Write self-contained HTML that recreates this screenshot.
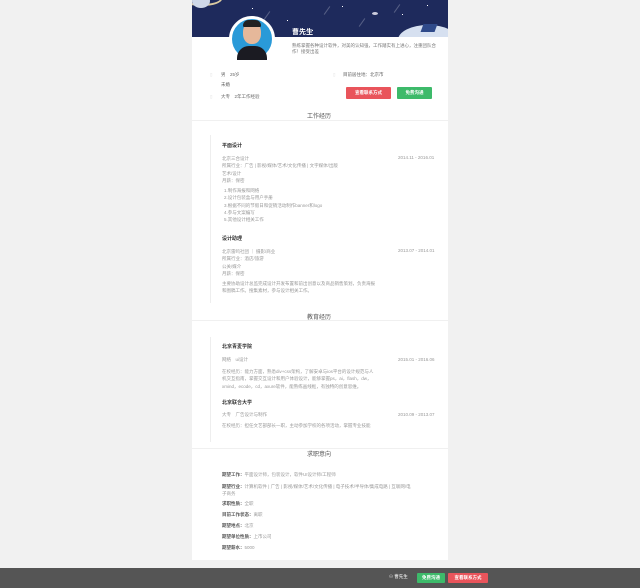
<!DOCTYPE html>
<html><head><meta charset="utf-8"><style>
*{margin:0;padding:0;box-sizing:border-box}
body{width:640px;height:588px;background:#f1f1f1;position:relative;overflow:hidden;font-family:"Liberation Sans","Noto Sans CJK SC",sans-serif;color:#999;font-size:4.5px;line-height:1.4}
.a{position:absolute;white-space:nowrap}
.card{position:absolute;left:192px;top:0;width:256px;height:560px;background:#fff}
.banner{position:absolute;left:192px;top:0;width:256px;height:37px;background:#1e2a5c;overflow:hidden}
.t{color:#555;font-size:6px}
.h{color:#333;font-weight:bold;font-size:5px}
.btn{position:absolute;color:#fff;font-size:4.5px;text-align:center;border-radius:1px;font-weight:bold}
.line{position:absolute;left:210px;width:1px;background:#eee}
.sep{position:absolute;left:192px;width:256px;height:1px;background:#f0f0f0}
.s{position:absolute;width:1px;height:1px;background:#fff}
.st{position:absolute;width:10px;height:1px;background:rgba(255,255,255,.25);transform:rotate(-55deg)}
</style></head><body>
<div class="card"></div>
<div class="banner">
<div class="a" style="left:-10px;top:-8px;width:40px;height:14px;border-radius:50%;border:2px solid #d9c9a0"></div>
<div class="a" style="left:0;top:-6px;width:18px;height:14px;border-radius:50%;background:#cfd8e8"></div>
<div class="a" style="left:180px;top:12px;width:6px;height:3px;border-radius:50%;background:#ccd"></div>
<div class="a" style="left:206px;top:25px;width:60px;height:30px;border-radius:50%;background:#d6e0f0"></div>
<div class="a" style="left:230px;top:24px;width:14px;height:8px;background:#2f4a8a;transform:skewX(-20deg)"></div>
<div class="s" style="left:60px;top:8px"></div><div class="s" style="left:95px;top:20px"></div><div class="s" style="left:150px;top:6px"></div><div class="s" style="left:210px;top:14px"></div><div class="s" style="left:120px;top:30px"></div><div class="s" style="left:235px;top:5px"></div>
<div class="st" style="left:70px;top:15px"></div><div class="st" style="left:130px;top:10px"></div><div class="st" style="left:165px;top:22px"></div><div class="st" style="left:200px;top:8px"></div>
</div>
<div class="a" style="left:229px;top:16px;width:46px;height:46px;border-radius:50%;background:#2a9ad8;border:3px solid #fff"></div>
<div class="a" style="left:243px;top:22px;width:18px;height:22px;border-radius:45%;background:#e6b89a"></div>
<div class="a" style="left:243px;top:20px;width:18px;height:7px;border-radius:8px 8px 2px 2px;background:#222"></div>
<div class="a" style="left:237px;top:46px;width:30px;height:14px;border-radius:12px 12px 0 0;background:#1b1b22"></div>
<div class="a" style="left:292px;top:28px;color:#fff;font-weight:bold;font-size:7px">曹先生</div>
<div class="a" style="left:292px;top:43px;color:#777;white-space:normal;width:148px">熟练掌握各种设计软件，对美的认知强，工作踏实有上进心，注重团队合作！接受出差</div>
<div class="a" style="left:210px;top:72px;color:#ddd">▯</div>
<div class="a" style="left:221px;top:72px;color:#666">男　25岁</div>
<div class="a" style="left:221px;top:82px;color:#666">未婚</div>
<div class="a" style="left:210px;top:94px;color:#ddd">▯</div>
<div class="a" style="left:221px;top:94px;color:#666">大专　2年工作经验</div>
<div class="a" style="left:333px;top:72px;color:#ddd">▯</div>
<div class="a" style="left:343px;top:72px;color:#666">目前居住地：北京市</div>
<div class="btn" style="left:346px;top:87px;width:45px;height:12px;line-height:12px;background:#e9545b">查看联系方式</div>
<div class="btn" style="left:397px;top:87px;width:35px;height:12px;line-height:12px;background:#3dba6a">免费沟通</div>
<div class="sep" style="top:120px"></div>
<div class="a t" style="left:307px;top:113px">工作经历</div>
<div class="line" style="top:135px;height:168px"></div>
<div class="a h" style="left:222px;top:143px">平面设计</div>
<div class="a" style="left:222px;top:155px;line-height:7.3px">北京三合设计<br>所属行业：广告 | 影视/媒体/艺术/文化传播 | 文字媒体/出版<br>艺术/设计<br>月薪：保密</div>
<div class="a" style="left:398px;top:155px">2014.11 - 2016.01</div>
<div class="a" style="left:224px;top:187px;line-height:7.3px">1.制作海报和网络<br>2.设计包装盒与用户手册<br>3.根据不同的节假日和促销活动制作banner和logo<br>4.参与文案编写<br>5.其他设计相关工作</div>
<div class="a h" style="left:222px;top:236px">设计助理</div>
<div class="a" style="left:222px;top:248px;line-height:7.3px">北京雷鸣社团 ｜ 摄影/商业<br>所属行业：酒店/旅游<br>公关/媒介<br>月薪：保密</div>
<div class="a" style="left:398px;top:248px">2013.07 - 2014.01</div>
<div class="a" style="left:222px;top:280px;line-height:7.3px">主要协助设计总监完成设计开发布置和前出创意以及商品销售策划，负责海报<br>和图稿工作。搜集素材，参与设计相关工作。</div>
<div class="sep" style="top:320px"></div>
<div class="a t" style="left:307px;top:314px">教育经历</div>
<div class="line" style="top:337px;height:105px"></div>
<div class="a h" style="left:222px;top:344px">北京青麦学院</div>
<div class="a" style="left:222px;top:357px">网络　ui设计</div>
<div class="a" style="left:398px;top:357px">2015.01 - 2016.06</div>
<div class="a" style="left:222px;top:368px;line-height:7.3px">在校经历：能力方面，熟悉div+css架构，了解安卓与ios平台的设计规范与人<br>机交互指南，掌握交互设计和用户体验设计，能够掌握ps，ai，flash，dw，<br>xmind，ecode，cd，axure软件，能熟练画线框，有独特的创意思维。</div>
<div class="a h" style="left:222px;top:400px">北京联合大学</div>
<div class="a" style="left:222px;top:412px">大专　广告设计与制作</div>
<div class="a" style="left:398px;top:412px">2010.09 - 2013.07</div>
<div class="a" style="left:222px;top:423px">在校经历：担任文艺部部长一职，主动参加学校的各项活动，掌握专业技能</div>
<div class="sep" style="top:448px"></div>
<div class="a t" style="left:307px;top:451px">求职意向</div>
<div class="a" style="left:222px;top:472px"><b style="color:#555">期望工作：</b>平面设计师，包装设计，软件UI设计师/工程师</div>
<div class="a" style="left:222px;top:483px;white-space:normal;width:190px;line-height:7.3px"><b style="color:#555">期望行业：</b>计算机软件 | 广告 | 影视/媒体/艺术/文化传播 | 电子技术/半导体/集成电路 | 互联网/电子商务</div>
<div class="a" style="left:222px;top:501px"><b style="color:#555">求职性质：</b>全职</div>
<div class="a" style="left:222px;top:512px"><b style="color:#555">目前工作状态：</b>离职</div>
<div class="a" style="left:222px;top:523px"><b style="color:#555">期望地点：</b>北京</div>
<div class="a" style="left:222px;top:534px"><b style="color:#555">期望单位性质：</b>上市公司</div>
<div class="a" style="left:222px;top:545px"><b style="color:#555">期望薪水：</b>5000</div>
<div class="a" style="left:0;top:568px;width:640px;height:20px;background:#555"></div>
<div class="a" style="left:389px;top:574px;color:#fff">⚇ 曹先生</div>
<div class="btn" style="left:417px;top:573px;width:28px;height:10px;line-height:10px;background:#3dba6a">免费沟通</div>
<div class="btn" style="left:448px;top:573px;width:40px;height:10px;line-height:10px;background:#e9545b">查看联系方式</div>
</body></html>
